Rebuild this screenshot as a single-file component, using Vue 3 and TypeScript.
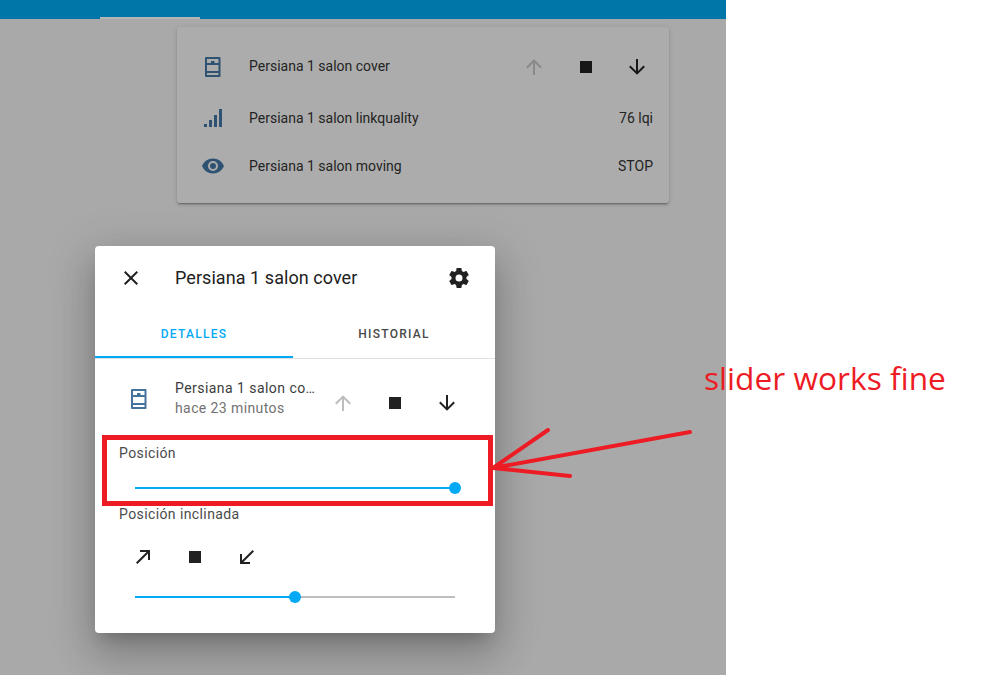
<template>
  <div class="page">
    <div class="screen">
      <header class="topbar">
        <div class="active-tab"></div>
      </header>

      <section class="card">
        <div class="card-row first">
          <svg class="state-icon" viewBox="0 0 24 24"><path :d="icons.blind" /></svg>
          <span class="card-name">Persiana 1 salon cover</span>
          <div class="controls card-controls">
            <button class="icon-btn off"><svg viewBox="0 0 24 24"><path :d="icons.up" /></svg></button>
            <button class="icon-btn"><svg viewBox="0 0 24 24"><path :d="icons.stop" /></svg></button>
            <button class="icon-btn"><svg viewBox="0 0 24 24"><path :d="icons.down" /></svg></button>
          </div>
        </div>
        <div v-for="row in sensorRows" :key="row.name" class="card-row">
          <svg class="state-icon" viewBox="0 0 24 24"><path :d="row.icon" /></svg>
          <span class="card-name">{{ row.name }}</span>
          <span class="card-value">{{ row.value }}</span>
        </div>
      </section>

      <div class="dialog">
        <div class="dialog-head">
          <button class="head-btn"><svg viewBox="0 0 24 24"><path :d="icons.close" /></svg></button>
          <h2 class="dialog-title">Persiana 1 salon cover</h2>
          <button class="head-btn"><svg viewBox="0 0 24 24"><path :d="icons.gear" /></svg></button>
        </div>

        <div class="tabs">
          <div class="tab active">DETALLES</div>
          <div class="tab">HISTORIAL</div>
        </div>

        <div class="dialog-body">
          <div class="entity">
            <svg class="entity-icon" viewBox="0 0 24 24"><path :d="icons.blind" /></svg>
            <div class="entity-text">
              <div class="entity-name">Persiana 1 salon co…</div>
              <div class="entity-time">hace 23 minutos</div>
            </div>
            <div class="controls">
              <button class="icon-btn off light"><svg viewBox="0 0 24 24"><path :d="icons.up" /></svg></button>
              <button class="icon-btn"><svg viewBox="0 0 24 24"><path :d="icons.stop" /></svg></button>
              <button class="icon-btn"><svg viewBox="0 0 24 24"><path :d="icons.down" /></svg></button>
            </div>
          </div>

          <div class="label">Posición</div>
          <div class="slider position-slider">
            <div class="fill" :style="{ width: position + '%' }"></div>
            <div class="thumb" :style="{ left: position + '%' }"></div>
          </div>

          <div class="label tilt-label">Posición inclinada</div>
          <div class="controls tilt-controls">
            <button class="icon-btn"><svg viewBox="0 0 24 24"><path :d="icons.topRight" /></svg></button>
            <button class="icon-btn"><svg viewBox="0 0 24 24"><path :d="icons.stop" /></svg></button>
            <button class="icon-btn"><svg viewBox="0 0 24 24"><path :d="icons.bottomLeft" /></svg></button>
          </div>
          <div class="slider">
            <div class="fill" :style="{ width: tilt + '%' }"></div>
            <div class="thumb" :style="{ left: tilt + '%' }"></div>
          </div>
        </div>
      </div>
    </div>

    <!-- annotation drawn on top of the screenshot -->
    <div class="note-box"></div>
    <svg class="note-arrow" viewBox="0 0 984 690">
      <path d="M690 432L493 468L548 430M493 468L570 476" />
    </svg>
    <div class="note-text">slider works fine</div>
  </div>
</template>

<script setup lang="ts">
const icons = {
  blind: 'M5 2H18.5A1 1 0 0 1 19.5 3V21A1 1 0 0 1 18.5 22H5A1 1 0 0 1 4 21V3A1 1 0 0 1 5 2ZM6 4V8H10V6H13.5V8H17.5V4ZM6 10V16H17.5V10ZM6 18V20H17.5V18Z',
  signal: 'M3,21H6V18H3M8,21H11V14H8M13,21H16V9H13M18,21H21V3H18V21Z',
  eye: 'M12,9A3,3 0 0,0 9,12A3,3 0 0,0 12,15A3,3 0 0,0 15,12A3,3 0 0,0 12,9M12,17A5,5 0 0,1 7,12A5,5 0 0,1 12,7A5,5 0 0,1 17,12A5,5 0 0,1 12,17M12,4.5C7,4.5 2.73,7.61 1,12C2.73,16.39 7,19.5 12,19.5C17,19.5 21.27,16.39 23,12C21.27,7.61 17,4.5 12,4.5Z',
  up: 'M13,20H11V8L5.5,13.5L4.08,12.08L12,4.16L19.92,12.08L18.5,13.5L13,8V20Z',
  down: 'M11,4H13V16L18.5,10.5L19.92,11.92L12,19.84L4.08,11.92L5.5,10.5L11,16V4Z',
  stop: 'M18,18H6V6H18V18Z',
  close: 'M19,6.41L17.59,5L12,10.59L6.41,5L5,6.41L10.59,12L5,17.59L6.41,19L12,13.41L17.59,19L19,17.59L13.41,12L19,6.41Z',
  gear: 'M12,15.5A3.5,3.5 0 0,1 8.5,12A3.5,3.5 0 0,1 12,8.5A3.5,3.5 0 0,1 15.5,12A3.5,3.5 0 0,1 12,15.5M19.43,12.97C19.47,12.65 19.5,12.33 19.5,12C19.5,11.67 19.47,11.34 19.43,11L21.54,9.37C21.73,9.22 21.78,8.95 21.66,8.73L19.66,5.27C19.54,5.05 19.27,4.96 19.05,5.05L16.56,6.05C16.04,5.66 15.5,5.32 14.87,5.07L14.5,2.42C14.46,2.18 14.25,2 14,2H10C9.75,2 9.54,2.18 9.5,2.42L9.13,5.07C8.5,5.32 7.96,5.66 7.44,6.05L4.95,5.05C4.73,4.96 4.46,5.05 4.34,5.27L2.34,8.73C2.21,8.95 2.27,9.22 2.46,9.37L4.57,11C4.53,11.34 4.5,11.67 4.5,12C4.5,12.33 4.53,12.65 4.57,12.97L2.46,14.63C2.27,14.78 2.21,15.05 2.34,15.27L4.34,18.73C4.46,18.95 4.73,19.03 4.95,18.95L7.44,17.94C7.96,18.34 8.5,18.68 9.13,18.93L9.5,21.58C9.54,21.82 9.75,22 10,22H14C14.25,22 14.46,21.82 14.5,21.58L14.87,18.93C15.5,18.67 16.04,18.34 16.56,17.94L19.05,18.95C19.27,19.03 19.54,18.95 19.66,18.73L21.66,15.27C21.78,15.05 21.73,14.78 21.54,14.63L19.43,12.97Z',
  topRight: 'M5,17.59L15.59,7H9V5H19V15H17V8.41L6.41,19L5,17.59Z',
  bottomLeft: 'M19,6.41L8.41,17H15V19H5V9H7V15.59L17.59,5L19,6.41Z',
}

const sensorRows = [
  { name: 'Persiana 1 salon linkquality', value: '76 lqi', icon: icons.signal },
  { name: 'Persiana 1 salon moving', value: 'STOP', icon: icons.eye },
]

const position = 100
const tilt = 50
</script>

<style>
html,
body {
  margin: 0;
  background: #fff;
}
</style>

<style scoped>
.page {
  position: relative;
  width: 984px;
  height: 690px;
  overflow: hidden;
  background: #fff;
  font-family: Roboto, "Liberation Sans", sans-serif;
}

.screen {
  position: relative;
  width: 726px;
  height: 675px;
  overflow: hidden;
  background: #a9a9a9;
}

.topbar {
  height: 19px;
  padding-left: 100px;
  background: #0075a8;
  display: flex;
  align-items: flex-end;
}

.active-tab {
  width: 100px;
  height: 2px;
  background: #b5b5b5;
}

.card {
  width: 492px;
  height: 176px;
  box-sizing: border-box;
  margin: 8px 0 0 177px;
  padding: 16px 16px 0 24px;
  background: #acacac;
  border-radius: 3px;
  box-shadow: 0 2px 2px rgba(0, 0, 0, 0.14), 0 1px 5px rgba(0, 0, 0, 0.12), 0 3px 1px -2px rgba(0, 0, 0, 0.2);
}

.card-row {
  display: flex;
  align-items: center;
  height: 40px;
  margin-top: 8px;
}

.card-row.first {
  height: 48px;
  margin-top: 0;
  margin-bottom: -1px;
}

.card-row.first .card-name {
  margin-top: -2px;
}

.state-icon {
  width: 24px;
  height: 24px;
  fill: #2f5273;
  flex-shrink: 0;
}

.card-name {
  flex: 1;
  margin-left: 24px;
  font-size: 14px;
  color: #232323;
}

.card-value {
  font-size: 14px;
  color: #232323;
}

.controls {
  display: flex;
  flex-shrink: 0;
}

.card-controls {
  margin-right: -10px;
}

.card-controls .icon-btn:last-child {
  margin-left: -1px;
}

.icon-btn {
  width: 52px;
  height: 48px;
  padding: 0;
  border: none;
  background: none;
  display: flex;
  align-items: center;
  justify-content: center;
  color: #212121;
}

.icon-btn svg {
  width: 24px;
  height: 24px;
  fill: currentColor;
}

.card-controls .icon-btn {
  color: #171717;
}

.card-controls .icon-btn.off {
  color: #8a8a8a;
}

.icon-btn.off.light {
  color: #bdbdbd;
}

.dialog {
  position: absolute;
  left: 95px;
  top: 246px;
  width: 400px;
  height: 387px;
  background: #fff;
  border-radius: 4px;
  box-shadow: 0 11px 15px -7px rgba(0, 0, 0, 0.2), 0 24px 38px 3px rgba(0, 0, 0, 0.14), 0 9px 46px 8px rgba(0, 0, 0, 0.12);
}

.dialog-head {
  height: 64px;
  padding: 0 12px;
  display: flex;
  align-items: center;
}

.head-btn {
  width: 48px;
  height: 48px;
  padding: 0;
  border: none;
  background: none;
  display: flex;
  align-items: center;
  justify-content: center;
}

.head-btn svg {
  width: 24px;
  height: 24px;
  fill: #212121;
}

.dialog-title {
  flex: 1;
  margin: -1px 0 0 20px;
  font-size: 18px;
  font-weight: 400;
  letter-spacing: 0.06px;
  color: #212121;
}

.tabs {
  display: grid;
  grid-template-columns: 198px 1fr;
  height: 49px;
  box-sizing: border-box;
  border-bottom: 1px solid #e0e0e0;
}

.tab {
  height: 48px;
  line-height: 48px;
  text-align: center;
  font-size: 12px;
  font-weight: 500;
  letter-spacing: 1.25px;
  color: #4a4a4a;
}

.tab.active {
  color: #03a9f4;
  box-sizing: border-box;
  border-bottom: 2px solid #03a9f4;
}

.dialog-body {
  padding: 20px 22px 0 24px;
}

.entity {
  display: flex;
  align-items: flex-start;
}

.entity-icon {
  width: 24px;
  height: 24px;
  fill: #44739e;
  margin: 8px 0 0 8px;
  flex-shrink: 0;
}

.entity-text {
  flex: 1;
  min-width: 0;
  margin: -1px 2px 0 24px;
  font-size: 14px;
  line-height: 20px;
}

.entity-name {
  color: #3c3c3c;
  letter-spacing: 0.45px;
  white-space: nowrap;
}

.entity-time {
  color: #727272;
  letter-spacing: 0.4px;
}

.label {
  margin-top: 16px;
  font-size: 14px;
  line-height: 20px;
  letter-spacing: 0.4px;
  color: #4a4a4a;
}

.tilt-label {
  margin-top: 15px;
}

.tilt-controls {
  margin: 9px 0 15px -2px;
}

.slider {
  position: relative;
  width: 320px;
  height: 2px;
  margin-left: 16px;
  background: #bdbdbd;
}

.position-slider {
  margin-top: 24px;
}

.fill {
  height: 100%;
  background: #03a9f4;
}

.thumb {
  position: absolute;
  top: -5px;
  width: 12px;
  height: 12px;
  margin-left: -6px;
  border-radius: 50%;
  background: #03a9f4;
}

.note-box {
  position: absolute;
  left: 102px;
  top: 435px;
  width: 391px;
  height: 71px;
  box-sizing: border-box;
  border: 5px solid #ed1c24;
}

.note-arrow {
  position: absolute;
  left: 0;
  top: 0;
  width: 984px;
  height: 690px;
  fill: none;
  stroke: #ed1c24;
  stroke-width: 4;
  stroke-linecap: round;
}

.note-text {
  position: absolute;
  left: 704px;
  top: 356px;
  font-family: "Open Sans", "Noto Sans", sans-serif;
  font-size: 31.7px;
  line-height: 44px;
  color: #ed1c24;
  white-space: nowrap;
}
</style>
